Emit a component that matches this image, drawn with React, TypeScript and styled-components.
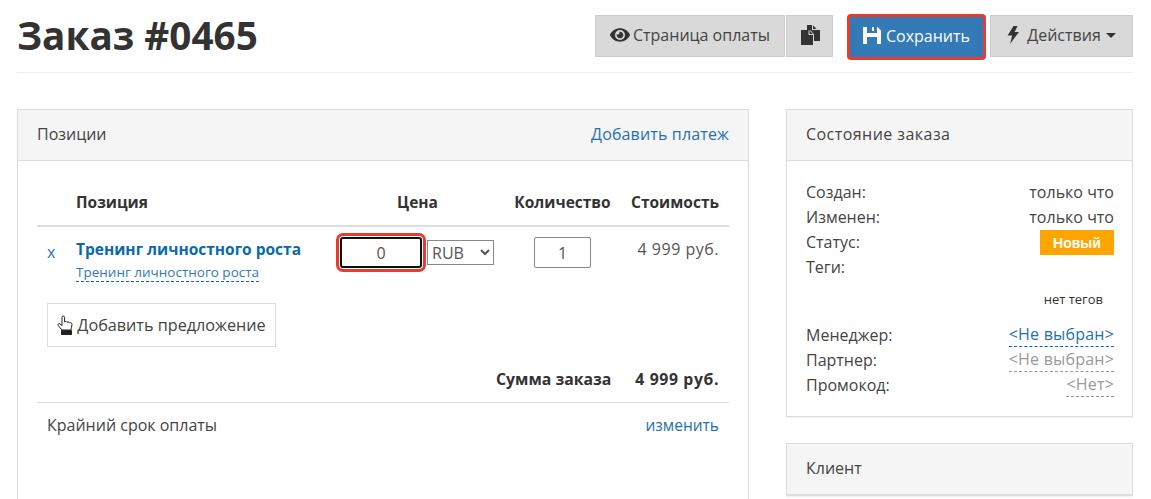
import React from "react";
import styled, { createGlobalStyle } from "styled-components";
import { FaEye } from "react-icons/fa";

const GlobalStyle = createGlobalStyle`
  html, body {
    margin: 0;
    height: 499px;
    overflow: hidden;
    background: #fff;
  }
  body {
    color: #333;
    font-family: "Open Sans", "Noto Sans", "Liberation Sans", sans-serif;
    font-size: 15px;
  }
  * {
    box-sizing: border-box;
  }
`;

function App() {
  return (
    <Page>
      <GlobalStyle />
      <Header>
        <Title>Заказ #0465</Title>
        <Toolbar>
          <ButtonGroup>
            <GrayButton $w={190} $gap={3}>
              <FaEye size={20} />
              Страница оплаты
            </GrayButton>
            <GrayButton $w={47}>
              <CopyIcon />
            </GrayButton>
          </ButtonGroup>
          <SaveButton>
            <SaveIcon />
            Сохранить
          </SaveButton>
          <GrayButton $w={143} $gap={8}>
            <BoltIcon />
            Действия
            <Caret />
          </GrayButton>
        </Toolbar>
      </Header>

      <Columns>
        <Panel>
          <PanelHead>
            <span>Позиции</span>
            <PanelLink>Добавить платеж</PanelLink>
          </PanelHead>
          <PanelBody>
            <Table>
              <thead>
                <tr>
                  <Th $w={39} />
                  <Th $w={259}>Позиция</Th>
                  <Th $w={165} $align="center">
                    Цена
                  </Th>
                  <QtyTh $w={121} $align="center">
                    Количество
                  </QtyTh>
                  <Th $w={108} $align="right">
                    Стоимость
                  </Th>
                </tr>
              </thead>
              <tbody>
                <tr>
                  <Td>
                    <RemoveLink>x</RemoveLink>
                  </Td>
                  <Td>
                    <ItemName>Тренинг личностного роста</ItemName>
                    <ItemSub>Тренинг личностного роста</ItemSub>
                  </Td>
                  <Td>
                    <PriceCell>
                      <PriceInput defaultValue="0" />
                      <CurrencySelect defaultValue="RUB">
                        <option>RUB</option>
                      </CurrencySelect>
                    </PriceCell>
                  </Td>
                  <Td $align="center">
                    <QtyInput defaultValue="1" />
                  </Td>
                  <Td $align="right">
                    <Cost>4 999 руб.</Cost>
                  </Td>
                </tr>
              </tbody>
            </Table>
            <OfferButton>
              <HandIcon />
              Добавить предложение
            </OfferButton>
            <TotalRow>
              <TotalLabel>Сумма заказа</TotalLabel>
              <TotalValue>4 999 руб.</TotalValue>
            </TotalRow>
            <DeadlineRow>
              <span>Крайний срок оплаты</span>
              <DeadlineLink>изменить</DeadlineLink>
            </DeadlineRow>
          </PanelBody>
        </Panel>

        <Side>
          <SidePanel>
            <PanelHead>
              <StateTitle>Состояние заказа</StateTitle>
            </PanelHead>
            <StateBody>
              <StateRow>
                <span>Создан:</span>
                <span>только что</span>
              </StateRow>
              <StateRow>
                <span>Изменен:</span>
                <span>только что</span>
              </StateRow>
              <StateRow>
                <span>Статус:</span>
                <StatusBadge>Новый</StatusBadge>
              </StateRow>
              <StateRow>
                <span>Теги:</span>
              </StateRow>
              <NoTags>нет тегов</NoTags>
              <StateRow>
                <span>Менеджер:</span>
                <DashedValue>&lt;Не выбран&gt;</DashedValue>
              </StateRow>
              <StateRow>
                <span>Партнер:</span>
                <DashedValue $muted>&lt;Не выбран&gt;</DashedValue>
              </StateRow>
              <StateRow>
                <span>Промокод:</span>
                <DashedValue $muted>&lt;Нет&gt;</DashedValue>
              </StateRow>
            </StateBody>
          </SidePanel>
          <SidePanel>
            <PanelHead>
              <span>Клиент</span>
            </PanelHead>
          </SidePanel>
        </Side>
      </Columns>
    </Page>
  );
}

function CopyIcon() {
  return (
    <svg width="20" height="20" viewBox="0 0 20 20" fill="#333">
      <path d="M1 5h7.500v5H13v10H1z" />
      <path d="M9.500 5.200L12.800 9H9.500z" />
      <path d="M7 0h5v5.500H7zM13 0.300L16.500 4H13zM13 5h7v11h-6V9.500L11 5.500z" />
    </svg>
  );
}

function SaveIcon() {
  return (
    <svg width="18" height="18" viewBox="0 0 18 18" fill="#fff">
      <path
        fillRule="evenodd"
        d="M0 0h14.500L18 3.500V17H0zM4 0v6h10V0h-3v4H9V0zM4 10v7h10v-7z"
      />
    </svg>
  );
}

function BoltIcon() {
  return (
    <svg width="12" height="18" viewBox="0 0 12 18" fill="#333">
      <path d="M6.500 0h4L7.600 6H12L3 18l2.200-8.500H0.600z" />
    </svg>
  );
}

function HandIcon() {
  return (
    <svg width="18" height="20" viewBox="0 0 18 20" fill="none" stroke="#222">
      <path d="M5 15L1.200 10.500c-.8-1.200.6-2.600 1.800-1.600L5 10.500V2.300c0-1.700 2.600-1.700 2.600 0V7c.8-.8 2-.6 2.400.3.8-.7 2-.4 2.400.5 1-.6 2.600 0 2.600 1.400 0 2.200-.8 3.800-1.200 5.800H5z" />
      <path d="M4.500 15.500h10V19.500h-10z" fill="#222" />
    </svg>
  );
}

const Page = styled.div`
  padding: 0 18px 0 17px;
`;

const Header = styled.header`
  height: 73px;
  display: flex;
  justify-content: space-between;
  align-items: flex-start;
  border-bottom: 1px solid #eee;
`;

const Title = styled.h1`
  margin: 12px 0 0;
  font-size: 38.7px;
  line-height: 46px;
  font-weight: 700;
  color: #333;
`;

const Toolbar = styled.div`
  display: flex;
  align-items: flex-start;
  margin-top: 14px;
`;

const ButtonGroup = styled.div`
  display: flex;
  gap: 1px;
  margin-top: 1px;
`;

const GrayButton = styled.div<{ $w: number; $gap?: number }>`
  width: ${(p) => p.$w}px;
  height: 42px;
  display: flex;
  align-items: center;
  justify-content: center;
  gap: ${(p) => p.$gap || 0}px;
  padding-bottom: 2px;
  background: #d9d9d9;
  border: 1px solid #ccc;
  color: #444;
  font-size: 16px;
  margin-top: 1px;
  ${ButtonGroup} & {
    margin-top: 0;
  }
  svg {
    flex: none;
    color: #333;
  }
`;

const SaveButton = styled.div`
  width: 139px;
  height: 46px;
  margin: 0 4px 0 14px;
  display: flex;
  align-items: center;
  justify-content: center;
  gap: 5px;
  padding-bottom: 2px;
  background: #337ab7;
  border: 3px solid #e53d30;
  border-radius: 4px;
  color: #fff;
  font-size: 16px;
`;

const Caret = styled.span`
  width: 0;
  height: 0;
  border-left: 5px solid transparent;
  border-right: 5px solid transparent;
  border-top: 5px solid #333;
  margin-left: -3px;
`;

const Columns = styled.div`
  display: flex;
  justify-content: space-between;
  align-items: flex-start;
  margin-top: 36px;
`;

const Panel = styled.section`
  width: 732px;
  height: 500px;
  border: 1px solid #ddd;
  box-shadow: 0 1px 1px rgba(0, 0, 0, 0.05);
`;

const PanelHead = styled.div`
  height: 51px;
  display: flex;
  align-items: center;
  justify-content: space-between;
  padding: 0 19px 3px;
  background: #f5f5f5;
  border-bottom: 1px solid #ddd;
  color: #444;
  font-size: 16px;
`;

const StateTitle = styled.span`
  letter-spacing: 0.45px;
`;

const PanelLink = styled.a`
  color: #1f72ae;
  font-size: 16px;
  letter-spacing: 0.15px;
`;

const DeadlineLink = styled(PanelLink)`
  font-size: 15.5px;
  letter-spacing: 0;
`;

const PanelBody = styled.div`
  padding: 20px 19px 0;
`;

const Table = styled.table`
  width: 692px;
  table-layout: fixed;
  border-collapse: collapse;
`;

const Th = styled.th<{ $w?: number; $align?: string }>`
  width: ${(p) => p.$w}px;
  height: 45px;
  padding: 0 ${(p) => (p.$align === "right" ? 10 : 0)}px 3px 0;
  text-align: ${(p) => p.$align || "left"};
  font-size: 15.5px;
  font-weight: 700;
  color: #333;
  border-bottom: 2px solid #ddd;
`;

const QtyTh = styled(Th)`
  padding-left: 4px;
`;

const Td = styled.td<{ $align?: string }>`
  padding: 10px 0 0;
  vertical-align: top;
  text-align: ${(p) => p.$align || "left"};
`;

const RemoveLink = styled.a`
  display: block;
  margin: 4px 0 0 10px;
  color: #1f72ae;
  font-size: 16px;
`;

const ItemName = styled.div`
  margin-top: 1px;
  color: #0a69aa;
  font-size: 15.5px;
  font-weight: 700;
  line-height: 22px;
`;

const ItemSub = styled.a`
  display: inline-block;
  margin-top: 3px;
  color: #337ab7;
  font-size: 13.5px;
  line-height: 18px;
  border-bottom: 1px dashed #0a69aa;
`;

const PriceCell = styled.div`
  display: flex;
  align-items: center;
  gap: 5px;
  margin-left: 5px;
`;

const PriceInput = styled.input`
  width: 82px;
  height: 31px;
  border: 2px solid #111;
  box-shadow: 0 0 0 1px #fff, 0 0 0 4px #e53d30;
  border-radius: 3px;
  text-align: center;
  font: 16px "Open Sans", sans-serif;
  color: #555;
  outline: none;
`;

const CurrencySelect = styled.select`
  width: 67px;
  height: 25px;
  border: 1px solid #888;
  border-radius: 0;
  background: #fff;
  font: 16px "Open Sans", sans-serif;
  color: #555;
`;

const QtyInput = styled.input`
  width: 57px;
  height: 31px;
  margin-left: 4px;
  border: 1px solid #888;
  border-radius: 2px;
  text-align: center;
  font: 16px "Open Sans", sans-serif;
  color: #555;
`;

const Cost = styled.div`
  padding-right: 10px;
  line-height: 24px;
  color: #555;
  font-size: 16px;
  letter-spacing: 0.5px;
`;

const OfferButton = styled.div`
  width: 229px;
  height: 44px;
  margin: 21px 0 0 10px;
  display: flex;
  align-items: center;
  justify-content: center;
  gap: 2px;
  border: 1px solid #ddd;
  color: #444;
  font-size: 16.2px;
  svg {
    flex: none;
  }
`;

const TotalRow = styled.div`
  display: flex;
  justify-content: flex-end;
  gap: 24px;
  height: 56px;
  padding: 20px 10px 0 0;
  line-height: 24px;
  font-size: 15.8px;
  font-weight: 700;
  color: #333;
  border-bottom: 1px solid #ddd;
`;

const TotalLabel = styled.span``;

const TotalValue = styled.span`
  letter-spacing: 0.6px;
`;

const DeadlineRow = styled.div`
  display: flex;
  justify-content: space-between;
  padding: 10px 10px 0;
  line-height: 24px;
  font-size: 16px;
  color: #444;
`;

const Side = styled.aside`
  width: 347px;
  display: flex;
  flex-direction: column;
  gap: 26px;
`;

const SidePanel = styled.section`
  border: 1px solid #ddd;
  box-shadow: 0 1px 1px rgba(0, 0, 0, 0.05);
`;

const StateBody = styled.div`
  padding: 19px 18px 18px 19px;
  color: #444;
  font-size: 16px;
`;

const StateRow = styled.div`
  display: flex;
  justify-content: space-between;
  height: 25px;
  line-height: 25px;
`;

const StatusBadge = styled.span`
  width: 74px;
  height: 25px;
  line-height: 26px;
  text-align: center;
  background: #ffa500;
  color: #fff;
  font-weight: 700;
  font-family: "Liberation Sans", sans-serif;
  font-size: 14px;
`;

const NoTags = styled.div`
  height: 43px;
  padding: 9px 11px 0 0;
  text-align: right;
  font-size: 13px;
  line-height: 20px;
  color: #333;
`;

const DashedValue = styled.a<{ $muted?: boolean }>`
  height: 24px;
  line-height: 23px;
  letter-spacing: 0.2px;
  color: ${(p) => (p.$muted ? "#999" : "#1f72ae")};
  border-bottom: 1px dashed ${(p) => (p.$muted ? "#999" : "#0a69aa")};
`;

export default App;
